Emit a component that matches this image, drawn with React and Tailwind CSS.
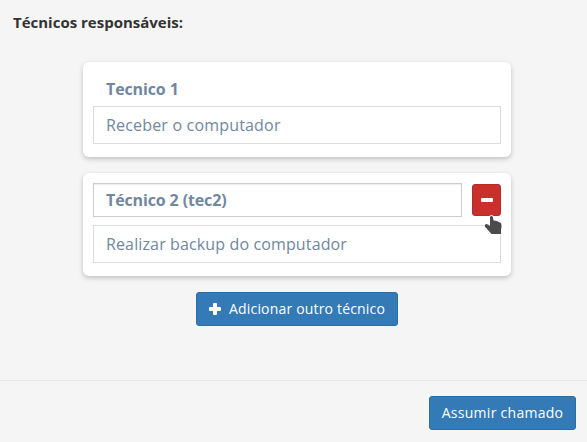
function Field({ children, className = "" }) {
  return (
    <div className={`flex items-center border bg-white px-3 text-base text-[#70879f] ${className}`}>
      <span>{children}</span>
    </div>
  );
}

function Card({ children }) {
  return (
    <section className="w-[428px] rounded-md bg-white px-2.5 shadow-[0_2px_5px_rgba(0,0,0,0.22)]">
      {children}
    </section>
  );
}

function PointerHand() {
  return (
    <svg className="absolute top-[30px] left-[10px] h-[21px] w-5" viewBox="0 0 20 21">
      <path
        d="M7 2.2Q7.3 1 8.4 1Q9.6 1 9.9 2.2L10.5 5.5L13 5.8L15.5 6.8L18 8L18.6 11L18 15V19H8.5L6.5 16.8L1.8 11.5V10L3 9L5 9.5L7 11Z"
        fill="#4b4b4b"
        stroke="#fff"
        strokeWidth="2"
        strokeLinejoin="round"
        paintOrder="stroke"
      />
    </svg>
  );
}

export default function App() {
  return (
    <main className="flex h-[442px] w-[587px] flex-col overflow-hidden bg-[#f5f5f5] font-['Open_Sans','Noto_Sans',sans-serif]">
      <h1 className="h-[62px] pt-3 pl-[13px] text-[15px] leading-[21px] font-bold text-[#333]">
        Técnicos responsáveis:
      </h1>
      <div className="flex flex-col items-center gap-4 pl-[7px]">
        <Card>
          <div className="h-[95px] pt-[15px]">
            <h2 className="h-[29px] pl-[13px] text-base leading-6 font-bold tracking-[-0.12px] text-[#70879f]">
              Tecnico 1
            </h2>
            <Field className="h-[38px] border-[#dcdcdc] tracking-[0.18px]">Receber o computador</Field>
          </div>
        </Card>
        <Card>
          <div className="h-[103px] pt-2.5">
            <div className="mb-2 flex items-center gap-2.5">
              <Field className="h-[34px] grow border-[#ccc] font-bold tracking-[-0.13px] shadow-[inset_0_1px_1px_rgba(0,0,0,0.075)]">
                Técnico 2 (tec2)
              </Field>
              <button
                aria-label="Remover técnico"
                className="relative flex h-8 w-[29px] items-center justify-center rounded-[3px] border border-[#b52b27] bg-[#c9302c]"
              >
                <span className="h-1 w-3 rounded-[1px] bg-white" />
                <PointerHand />
              </button>
            </div>
            <Field className="h-[38px] border-[#dcdcdc] tracking-[0.13px]">Realizar backup do computador</Field>
          </div>
        </Card>
        <button className="flex h-[34px] w-[202px] items-center rounded-[3px] border border-[#2e6da4] bg-[#337ab7] pl-3 text-sm tracking-[0.18px] whitespace-nowrap text-white">
          <svg className="mr-2 h-3 w-3 shrink-0" viewBox="0 0 12 12" fill="white">
            <path d="M4.9 0h2.2q.9 0 .9.9V4h3.1q.9 0 .9.9v2.2q0 .9-.9.9H8v3.1q0 .9-.9.9H4.9q-.9 0-.9-.9V8H.9Q0 8 0 7.1V4.9Q0 4 .9 4H4V.9Q4 0 4.9 0Z" />
          </svg>
          Adicionar outro técnico
        </button>
      </div>
      <footer className="mt-[54px] flex h-[62px] justify-end border-t border-[#e5e5e5] pt-[15px] pr-[11px]">
        <button className="h-[34px] w-[147px] rounded-[3px] border border-[#2e6da4] bg-[#337ab7] text-sm tracking-[0.27px] whitespace-nowrap text-white">
          Assumir chamado
        </button>
      </footer>
    </main>
  );
}
